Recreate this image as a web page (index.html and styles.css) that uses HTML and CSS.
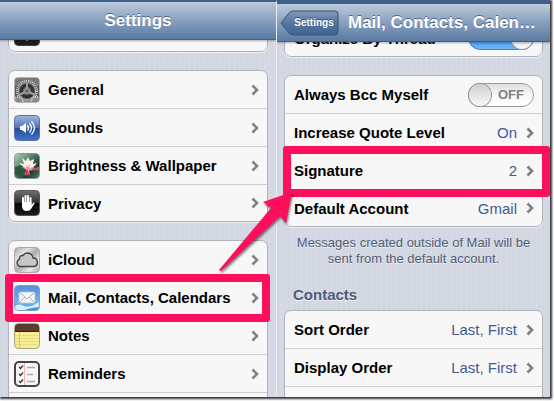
FILE: index.html
```
<!DOCTYPE html>
<html lang="en">
<head>
    <meta charset="UTF-8">
    <meta name="viewport" content="width=device-width, initial-scale=1.0">
    <title>Mail Signature Settings</title>
    <link rel="stylesheet" href="styles.css">
</head>
<body>
    <svg class="symbols" aria-hidden="true">
        <symbol id="chevron" viewBox="0 0 8 12">
            <path d="M1.5 1.5 L6 6 L1.5 10.5" fill="none" stroke="#808080" stroke-width="2.6"/>
        </symbol>
    </svg>

    <div class="screens">
        <main class="screen">
            <header class="navbar">
                <h1>Settings</h1>
            </header>
            <div class="content">
                <div class="card cropped">
                    <div class="row">
                        <svg class="icon" viewBox="0 0 26 26">
                            <rect x="0.5" y="0.5" width="25" height="25" rx="4" fill="#1c1c1e" stroke="#3a3b3d"/>
                            <circle cx="13" cy="20" r="1" fill="#aaa"/>
                        </svg>
                    </div>
                </div>

                <nav class="card">
                    <a class="row" href="#general">
                        <svg class="icon" viewBox="0 0 26 26">
                            <defs><clipPath id="tile"><rect x="1" y="1" width="24" height="24" rx="3"/></clipPath></defs>
                            <rect x="0.5" y="0.5" width="25" height="25" rx="4" fill="#5a5b5c" stroke="#b5b5b5"/>
                            <g clip-path="url(#tile)">
                                <rect x="1" y="1" width="24" height="8" fill="#77797a"/>
                                <circle cx="13" cy="14" r="10" fill="#474849" stroke="#d8d8d8" stroke-width="2" stroke-dasharray="1 1"/>
                                <circle cx="13" cy="14" r="8.5" fill="none" stroke="#bfbfbf" stroke-width="1"/>
                                <circle cx="13" cy="14" r="5.5" fill="#777" stroke="#303132" stroke-width="3"/>
                                <path d="M13 14V5M13 14L5 18M13 14L21 18" stroke="#9a9b9c" stroke-width="2"/>
                                <circle cx="13" cy="14" r="2" fill="#555" stroke="#aaa"/>
                                <circle cx="4" cy="25" r="5" fill="#888" stroke="#ddd" stroke-width="2" stroke-dasharray="1 1"/>
                                <circle cx="22" cy="25" r="5" fill="#888" stroke="#ddd" stroke-width="2" stroke-dasharray="1 1"/>
                            </g>
                        </svg>
                        <span class="name">General</span>
                        <svg class="chevron"><use href="#chevron"/></svg>
                    </a>
                    <a class="row" href="#sounds">
                        <svg class="icon" viewBox="0 0 26 26">
                            <defs>
                                <linearGradient id="blue" x2="0" y2="1">
                                    <stop offset="0" stop-color="#a3b7dc"/>
                                    <stop offset="0.5" stop-color="#4d70b5"/>
                                    <stop offset="0.5" stop-color="#234b9e"/>
                                    <stop offset="1" stop-color="#4671c2"/>
                                </linearGradient>
                            </defs>
                            <rect x="0.5" y="0.5" width="25" height="25" rx="4" fill="url(#blue)" stroke="#5570a4"/>
                            <path d="M6 11h2l4-3v10l-4-3H6z" fill="#fff"/>
                            <path d="M13.5 10.5q2 2.500 0 5M15.500 8.500q4 4.500 0 9M17.500 6.500q6 6.500 0 13" fill="none" stroke="#fff" stroke-width="1.300"/>
                        </svg>
                        <span class="name">Sounds</span>
                        <svg class="chevron"><use href="#chevron"/></svg>
                    </a>
                    <a class="row" href="#brightness">
                        <svg class="icon" viewBox="0 0 26 26">
                            <defs>
                                <linearGradient id="pond" x2="1" y2="1">
                                    <stop offset="0" stop-color="#b5d5bd"/>
                                    <stop offset="0.4" stop-color="#568168"/>
                                    <stop offset="0.7" stop-color="#203b31"/>
                                    <stop offset="1" stop-color="#527d61"/>
                                </linearGradient>
                            </defs>
                            <rect x="0.5" y="0.5" width="25" height="25" rx="4" fill="url(#pond)" stroke="#87958c"/>
                            <path d="M1 14q6-3 12 0l-3 8q-5 2-9 0z" fill="#2a583d"/>
                            <path d="M13 16l12-2v3l-12 1z" fill="#b75768"/>
                            <path d="M13 17L5 10l5 1-2-6 4 3 2-4 2 4 4-2-1 5 4-1-6 7z" fill="#fff0ef"/>
                            <path d="M13 17l-6-3 5 1-1-4 2 3 3-3-1 4 5-1-5 4 1 4-3-2-3 2z" fill="#ee9aa9"/>
                            <path d="M13 16l3 7-3-1-2 1z" fill="#c83c5f"/>
                        </svg>
                        <span class="name">Brightness &amp; Wallpaper</span>
                        <svg class="chevron"><use href="#chevron"/></svg>
                    </a>
                    <a class="row" href="#privacy">
                        <svg class="icon" viewBox="0 0 26 26">
                            <defs>
                                <linearGradient id="black" x2="0" y2="1">
                                    <stop offset="0" stop-color="#707070"/>
                                    <stop offset="0.5" stop-color="#303030"/>
                                    <stop offset="0.5" stop-color="#050505"/>
                                    <stop offset="1" stop-color="#1b1b1b"/>
                                </linearGradient>
                            </defs>
                            <rect x="0.5" y="0.5" width="25" height="25" rx="4" fill="url(#black)" stroke="#555"/>
                            <path d="M9 14V8M11.500 13V6M14 13V6M16.500 14V8" stroke="#fff" stroke-width="2" stroke-linecap="round"/>
                            <path d="M8 12h9.500v3l1.500-2q1.500-1 1.500 .5l-3.500 5.500q-1 2-4 2q-5 0-5-5z" fill="#fff"/>
                        </svg>
                        <span class="name">Privacy</span>
                        <svg class="chevron"><use href="#chevron"/></svg>
                    </a>
                </nav>

                <nav class="card">
                    <a class="row" href="#icloud">
                        <svg class="icon" viewBox="0 0 26 26">
                            <defs>
                                <linearGradient id="metal" x2="1" y2="1">
                                    <stop offset="0" stop-color="#a9a9a9"/>
                                    <stop offset="0.3" stop-color="#e4e4e4"/>
                                    <stop offset="0.5" stop-color="#aaa"/>
                                    <stop offset="0.75" stop-color="#e8e8e8"/>
                                    <stop offset="1" stop-color="#a5a5a5"/>
                                </linearGradient>
                            </defs>
                            <rect x="0.5" y="0.5" width="25" height="25" rx="4" fill="url(#metal)" stroke="#aaa"/>
                            <path d="M6 19.500a4 4 0 0 1-.5-7.500a3 3 0 0 1 3.500-3.500a5.500 5.500 0 0 1 10 2.500a4.300 4.300 0 0 1 1 8.500z" fill="#c7c7c7" stroke="#454545" stroke-width="1.400"/>
                        </svg>
                        <span class="name">iCloud</span>
                        <svg class="chevron"><use href="#chevron"/></svg>
                    </a>
                    <a class="row marked" href="#mail">
                        <svg class="icon" viewBox="0 0 26 26">
                            <defs>
                                <linearGradient id="sky" x2="0" y2="1">
                                    <stop offset="0" stop-color="#568fd8"/>
                                    <stop offset="0.7" stop-color="#73b5ee"/>
                                    <stop offset="1" stop-color="#2f8ad3"/>
                                </linearGradient>
                            </defs>
                            <rect x="0.5" y="0.5" width="25" height="25" rx="4" fill="url(#sky)" stroke="#78a1ce"/>
                            <path d="M1 21q4-3 9 0q6 2 15-4v5q-9 1-14 3H4q-3 0-3-4z" fill="#d9eefc"/>
                            <rect x="5" y="7" width="16" height="11" fill="#f5f7f9" stroke="#b8c1cb" stroke-width="0.700"/>
                            <path d="M5 7l8 7 8-7M5 18l6-6M21 18l-6-6" fill="none" stroke="#97a2ae" stroke-width="0.900"/>
                        </svg>
                        <span class="name">Mail, Contacts, Calendars</span>
                        <svg class="chevron"><use href="#chevron"/></svg>
                    </a>
                    <a class="row" href="#notes">
                        <svg class="icon" viewBox="0 0 26 26">
                            <rect x="0.5" y="0.5" width="25" height="25" rx="4" fill="#f7ee91" stroke="#aaa27a"/>
                            <path d="M1 8V4q0-3 3-3h18q3 0 3 3v4z" fill="#5a3a2d"/>
                            <path d="M1 8.500h24" stroke="#32221b"/>
                            <path d="M1 12.500h24M1 15.500h24M1 18.500h24M1 21.500h24" stroke="#e3db88"/>
                            <path d="M5.500 9v16" stroke="#e4c175"/>
                        </svg>
                        <span class="name">Notes</span>
                        <svg class="chevron"><use href="#chevron"/></svg>
                    </a>
                    <a class="row" href="#reminders">
                        <svg class="icon" viewBox="0 0 26 26">
                            <rect x="1" y="1" width="24" height="24" rx="4" fill="#f7f7f7" stroke="#454545" stroke-width="2"/>
                            <path d="M10.500 2v22" stroke="#f0b2b2"/>
                            <path d="M13 6.500h8M13 13.500h6M13 20.500h8" stroke="#aaa" stroke-width="1.300"/>
                            <path d="M5 6l1.500 1.500L9 4.500M5 13l1.500 1.500L9 11.500M5 20l1.500 1.500L9 18.500" fill="none" stroke="#333" stroke-width="1.300"/>
                        </svg>
                        <span class="name">Reminders</span>
                        <svg class="chevron"><use href="#chevron"/></svg>
                    </a>
                    <div class="row"></div>
                </nav>
            </div>
        </main>

        <section class="screen detail">
            <header class="navbar">
                <button type="button" class="back">
                    <svg class="back-shape" viewBox="0 0 60 26" preserveAspectRatio="none" aria-hidden="true">
                        <defs>
                            <linearGradient id="backfill" x2="0" y2="1">
                                <stop offset="0" stop-color="#8499b8"/>
                                <stop offset="0.5" stop-color="#56759f"/>
                                <stop offset="1" stop-color="#41658f"/>
                            </linearGradient>
                        </defs>
                        <path d="M1 13L9 3Q11 1 13 1H55Q58 1 58 4V22Q58 25 55 25H13Q11 25 9 23Z" fill="url(#backfill)" stroke="#3b516f"/>
                    </svg>
                    <span>Settings</span>
                </button>
                <h2 title="Mail, Contacts, Calendars">Mail, Contacts, Calen…</h2>
            </header>
            <div class="content">
                <div class="card cropped">
                    <label class="row">
                        <span class="name">Organize By Thread</span>
                        <span class="switch">
                            <input type="checkbox" checked>
                            <span class="state">ON</span>
                        </span>
                    </label>
                </div>

                <div class="card">
                    <label class="row">
                        <span class="name">Always Bcc Myself</span>
                        <span class="switch">
                            <input type="checkbox">
                            <span class="state">OFF</span>
                        </span>
                    </label>
                    <a class="row" href="#quote">
                        <span class="name">Increase Quote Level</span>
                        <span class="value">On</span>
                        <svg class="chevron"><use href="#chevron"/></svg>
                    </a>
                    <a class="row marked" href="#signature">
                        <span class="name">Signature</span>
                        <span class="value">2</span>
                        <svg class="chevron"><use href="#chevron"/></svg>
                    </a>
                    <a class="row" href="#account">
                        <span class="name">Default Account</span>
                        <span class="value">Gmail</span>
                        <svg class="chevron"><use href="#chevron"/></svg>
                    </a>
                </div>
                <p class="note">Messages created outside of Mail will be sent from the default account.</p>

                <h3>Contacts</h3>
                <div class="card">
                    <a class="row" href="#sort">
                        <span class="name">Sort Order</span>
                        <span class="value">Last, First</span>
                        <svg class="chevron"><use href="#chevron"/></svg>
                    </a>
                    <a class="row" href="#display">
                        <span class="name">Display Order</span>
                        <span class="value">Last, First</span>
                        <svg class="chevron"><use href="#chevron"/></svg>
                    </a>
                    <div class="row"></div>
                </div>
            </div>
        </section>

        <!-- arrow from the Mail row to the Signature row -->
        <svg class="arrow" viewBox="0 0 76 82" aria-hidden="true">
            <path d="M2 79L54 17L46 11L75 1L69 32L63 25L4 80Z" fill="#ff0f5b"/>
        </svg>
    </div>
</body>
</html>
```

FILE: styles.css
```
* {
    margin: 0;
    padding: 0;
    box-sizing: border-box;
    font-family: "Liberation Sans", Helvetica, Arial, sans-serif;
}

body {
    background: white;
    height: 100vh;
    padding: 0 4px 4px 0;
    overflow: hidden;
}

.symbols {
    display: none;
}

.screens {
    position: relative;
    display: grid;
    grid-template-columns: 277fr 273fr;
    height: 100%;
    box-shadow: 1px 1px 2px 1px #333;
}

.screen {
    display: flex;
    flex-direction: column;
    min-width: 0;
    overflow: hidden;
    border-top: 2px solid #3f5f8b;
    border-right: 1px solid #e8edf5;
    background: repeating-linear-gradient(90deg, #d2d7e2 0 4px, #d6dbe5 4px 5px);
}

.screen.detail {
    border-top-width: 4px;
    border-right: none;
}

/* Navigation bar */
.navbar {
    position: relative;
    z-index: 1;
    flex: none;
    display: flex;
    align-items: center;
    justify-content: center;
    height: 38px;
    background: linear-gradient(#bccbdc, #889fbe 50%, #597aa3);
    border-bottom: 1px solid #436188;
    box-shadow: 0 1px 2px rgba(0, 0, 0, 0.3);
}

.navbar h1,
.navbar h2 {
    color: white;
    font-size: 17px;
    line-height: 24px;
    text-shadow: 0 -1px 0 rgba(50, 70, 100, 0.7);
}

.navbar h2 {
    flex: 1;
    white-space: nowrap;
}

.detail .navbar {
    gap: 8px;
    padding: 0 8px 0 3px;
}

.back {
    position: relative;
    flex: none;
    width: 60px;
    height: 26px;
    padding-left: 8px;
    border: none;
    background: none;
    color: white;
    font-size: 10px;
    font-weight: bold;
    text-shadow: 0 -1px 0 #3b516f;
    cursor: pointer;
}

.back span {
    position: relative;
}

.back-shape {
    position: absolute;
    inset: 0;
    width: 100%;
    height: 100%;
}

/* Grouped lists */
.content {
    flex: 1;
    min-height: 0;
    padding: 0 8px;
}

.detail .content {
    padding: 0 7px;
}

.card {
    margin-bottom: 18px;
    background: #f7f7f7;
    border: 1px solid #aeb3bb;
    border-radius: 7px;
    box-shadow: 0 1px 0 #eef0f4;
}

.card.cropped {
    margin-top: -26px;
}

.detail .card.cropped {
    margin-top: -23px;
}

.row {
    position: relative;
    display: flex;
    align-items: center;
    height: 38px;
    padding: 0 8px 0 5px;
    border-bottom: 1px solid #cdcdcd;
    color: black;
    text-decoration: none;
}

.detail .row {
    padding-left: 9px;
}

.row:last-child {
    height: 36px;
    border-bottom: none;
}

.icon {
    flex: none;
    width: 26px;
    height: 26px;
    margin-right: 8px;
}

.name {
    flex: 1;
    font-size: 15px;
    font-weight: bold;
    white-space: nowrap;
}

.value {
    color: #3f5a94;
    font-size: 15px;
}

.chevron {
    flex: none;
    width: 8px;
    height: 12px;
    margin-left: 9px;
}

/* Highlighted rows */
.marked::after {
    content: "";
    position: absolute;
    z-index: 2;
    inset: -5px -3px -6px -4px;
    border: 8px solid #ff0f5b;
    border-radius: 3px;
}

.detail .marked::after {
    inset: -6px -8px -8px -2px;
}

/* Switches */
.switch {
    position: relative;
    width: 66px;
    height: 24px;
}

.switch input {
    appearance: none;
    display: flex;
    width: 100%;
    height: 100%;
    border: 1px solid #999;
    border-radius: 12px;
    background: linear-gradient(#dedede, #f8f8f8 50%, white);
}

.switch input::before {
    content: "";
    width: 22px;
    height: 22px;
    border-radius: 50%;
    background: linear-gradient(#cecece, #f8f8f8);
    box-shadow: 0 0 0 1px #929292;
}

.switch input:checked {
    justify-content: flex-end;
    border-color: #4d83bd;
    background: linear-gradient(#1764bc, #3c94ee 50%, #6fb6f9);
}

.state {
    position: absolute;
    top: 4px;
    right: 10px;
    color: #808080;
    font-size: 13px;
    line-height: 16px;
    font-weight: bold;
}

input:checked + .state {
    right: auto;
    left: 14px;
    color: white;
}

.note {
    margin: -10px 8px 19px;
    color: #515e77;
    font-size: 13px;
    line-height: 16px;
    text-align: center;
    text-shadow: 0 1px 0 #e8ebf1;
}

h3 {
    margin: 0 9px 6px;
    color: #4f5b76;
    font-size: 15px;
    line-height: 18px;
    text-shadow: 0 1px 0 #eef0f4;
}

.arrow {
    position: absolute;
    z-index: 3;
    top: 191px;
    left: calc(50% - 58px);
    width: 76px;
    height: 82px;
    filter: drop-shadow(1px 2px 1px rgba(0, 0, 0, 0.5));
}
```
